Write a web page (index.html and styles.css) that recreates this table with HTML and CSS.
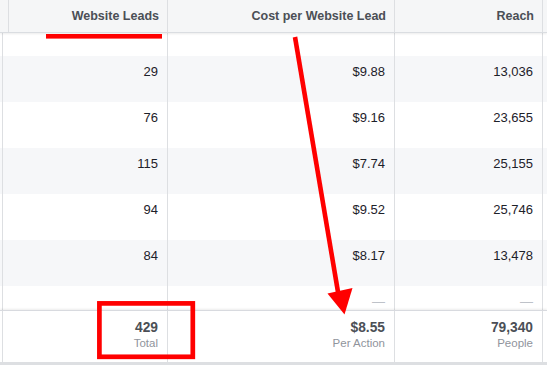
FILE: index.html
```html
<!DOCTYPE html>
<html>
<head>
<meta charset="utf-8">
<link rel="stylesheet" href="styles.css">
</head>
<body>
<div class="table">
  <div class="row head">
    <div class="cell stub"></div>
    <div class="cell">Website Leads</div>
    <div class="cell">Cost per Website Lead</div>
    <div class="cell">Reach</div>
    <div class="cell tail"></div>
  </div>
  <div class="body">
    <div class="scroll">
      <div class="row data partial"><div class="cell stub"></div><div class="cell"></div><div class="cell"></div><div class="cell"></div><div class="cell tail"></div></div>
      <div class="row data alt"><div class="cell stub"></div><div class="cell">29</div><div class="cell">$9.88</div><div class="cell">13,036</div><div class="cell tail"></div></div>
      <div class="row data"><div class="cell stub"></div><div class="cell">76</div><div class="cell">$9.16</div><div class="cell">23,655</div><div class="cell tail"></div></div>
      <div class="row data alt"><div class="cell stub"></div><div class="cell">115</div><div class="cell">$7.74</div><div class="cell">25,155</div><div class="cell tail"></div></div>
      <div class="row data"><div class="cell stub"></div><div class="cell">94</div><div class="cell">$9.52</div><div class="cell">25,746</div><div class="cell tail"></div></div>
      <div class="row data alt"><div class="cell stub"></div><div class="cell">84</div><div class="cell">$8.17</div><div class="cell">13,478</div><div class="cell tail"></div></div>
      <div class="row data"><div class="cell stub"></div><div class="cell"></div><div class="cell dash">—</div><div class="cell dash">—</div><div class="cell tail"></div></div>
    </div>
  </div>
  <div class="row foot">
    <div class="cell stub"></div>
    <div class="cell"><span class="val">429</span><span class="lbl">Total</span></div>
    <div class="cell"><span class="val">$8.55</span><span class="lbl">Per Action</span></div>
    <div class="cell"><span class="val">79,340</span><span class="lbl">People</span></div>
    <div class="cell tail"></div>
  </div>
  <svg class="annot" width="547" height="365" viewBox="0 0 547 365">
    <rect x="46" y="34" width="116" height="4.6" fill="#f00"/>
    <rect x="99.4" y="303.4" width="93.4" height="53.4" fill="none" stroke="#f00" stroke-width="4.7"/>
    <line x1="295" y1="37" x2="338" y2="292" stroke="#f00" stroke-width="4.6"/>
    <polygon points="327.5,293.5 352.5,288 344.5,314.5" fill="#f00"/>
  </svg>
</div>
</body>
</html>
```

FILE: styles.css
```css
html, body {
  margin: 0;
  padding: 0;
  background: #fff;
}
.table {
  position: relative;
  width: 547px;
  height: 365px;
  overflow: hidden;
  font-family: "Liberation Sans", Arial, sans-serif;
  color: #1d2129;
  display: flex;
  flex-direction: column;
}
.row {
  display: grid;
  grid-template-columns: 3px 165px 227px 148px 1fr;
}
.cell {
  border-right: 1px solid #dddfe2;
  text-align: right;
  padding-right: 9px;
  box-sizing: border-box;
}
.cell.stub { padding: 0; }
.cell.tail { border-right: none; padding: 0; }
.head {
  height: 33px;
  flex: none;
  background: #f5f6f7;
  border-bottom: 1px solid #dadde1;
  box-sizing: border-box;
  box-shadow: 0 1px 2px rgba(0, 0, 0, 0.08);
  position: relative;
  z-index: 1;
  font-weight: bold;
  font-size: 12.5px;
  color: #4b4f56;
}
.head .cell {
  display: flex;
  align-items: center;
  justify-content: flex-end;
  padding-right: 8px;
}
.body {
  height: 277px;
  flex: none;
  overflow: hidden;
}
.scroll {
  margin-top: -23px;
}
.data {
  height: 46px;
  font-size: 13px;
  line-height: 16px;
}
.data .cell { padding-top: 8px; }
.data.alt { background: #f6f7f9; }
.dash { color: #bec2c9; }
.foot {
  height: 55px;
  flex: none;
  border-top: 1px solid #d8dadf;
  border-bottom: 3px solid #dddfe2;
  box-sizing: border-box;
  box-shadow: 0 -1px 2px rgba(0, 0, 0, 0.08);
  position: relative;
  z-index: 1;
  background: #fff;
}
.foot .cell {
  padding-top: 9px;
  display: flex;
  flex-direction: column;
  align-items: flex-end;
}
.val {
  font-weight: bold;
  font-size: 13.75px;
  line-height: 16px;
  color: #4b4f56;
}
.lbl {
  font-size: 11.5px;
  line-height: 15px;
  color: #90949c;
}
.annot {
  position: absolute;
  left: 0;
  top: 0;
  z-index: 2;
  pointer-events: none;
}
```
